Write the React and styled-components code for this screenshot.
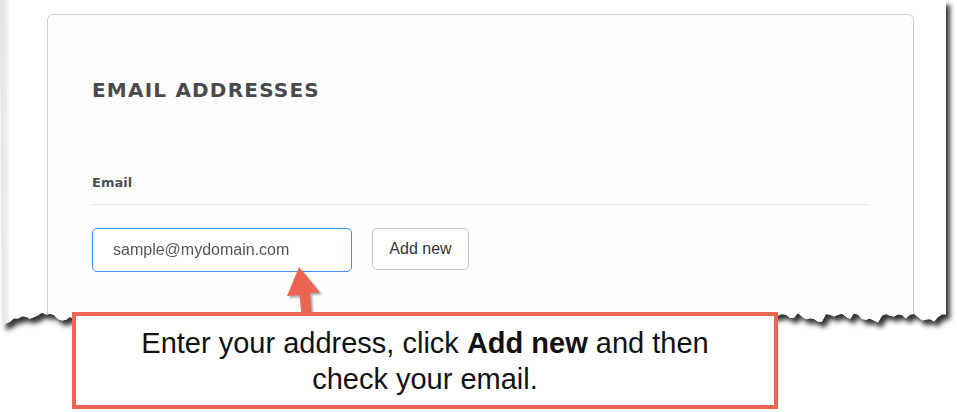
import React from 'react'
import styled, { createGlobalStyle } from 'styled-components'

const GlobalStyle = createGlobalStyle`
  html, body {
    margin: 0;
    padding: 0;
    background: #fff;
  }
  body {
    font-family: 'Liberation Sans', Arial, sans-serif;
  }
`

// ragged bottom edge of the clipped screenshot
const tornEdge = (() => {
  const pts = ['0px 0px', '946px 0px']
  for (let x = 946; x >= 0; x -= 4) {
    const n = ((x * 7919) % 7) - 3
    let y = 317 + 2.4 * Math.sin(x * 0.11) + 1.6 * Math.sin(x * 0.43 + 1) + n * 0.7
    if (x < 14) y += (14 - x) * 0.5
    if (x > 60 && x < 790) y = Math.max(y, 314)
    pts.push(`${x}px ${y.toFixed(1)}px`)
  }
  return `polygon(${pts.join(', ')})`
})()

const Stage = styled.div`
  position: relative;
  width: 957px;
  height: 412px;
  overflow: hidden;
  background: #fff;
`
const Torn = styled.div`
  width: 946px;
  filter: drop-shadow(4px 5px 2.5px rgba(0, 0, 0, 0.8));
`
const Paper = styled.div`
  height: 330px;
  display: flex;
  background: #fff;
  clip-path: ${tornEdge};
`
const Gutter = styled.div`
  width: 9px;
  flex: none;
  background: linear-gradient(to right, #e3e3e3, #ebebeb 60%, #f7f7f7);
`
const Content = styled.div`
  flex: 1;
  display: flex;
  padding: 14px 32px 0 38px;
`
const Card = styled.div`
  flex: 1;
  border: 1px solid #cdcdcd;
  border-bottom: none;
  border-radius: 6px 6px 0 0;
  padding: 64px 45px 0 44px;
  background: #fdfdfd;
`
const Title = styled.h2`
  margin: 0;
  font-family: 'DejaVu Sans', sans-serif;
  font-weight: 700;
  font-size: 20px;
  line-height: 23px;
  letter-spacing: 1.2px;
  color: #4a4a4e;
`
const Label = styled.div`
  margin-top: 73px;
  padding-bottom: 13px;
  border-bottom: 1px solid #e6e6e6;
  font-family: 'DejaVu Sans', sans-serif;
  font-weight: 700;
  font-size: 13px;
  line-height: 16px;
  color: #505053;
`
const Row = styled.div`
  margin-top: 23px;
  display: flex;
  align-items: flex-start;
  gap: 20px;
`
const Input = styled.input`
  box-sizing: border-box;
  width: 260px;
  height: 44px;
  padding: 0 20px;
  border: 1px solid #3d8ef2;
  border-radius: 5px;
  outline: none;
  background: #fff;
  font-family: 'Liberation Sans', Arial, sans-serif;
  font-size: 16px;
  color: #555;
  &::placeholder {
    color: #555;
    opacity: 1;
  }
`
const Button = styled.button`
  box-sizing: border-box;
  width: 97px;
  height: 42px;
  border: 1px solid #c6c6c6;
  border-radius: 5px;
  background: #fff;
  font-family: 'Liberation Sans', Arial, sans-serif;
  font-size: 16px;
  color: #333;
  cursor: pointer;
`
const Arrow = styled.svg`
  position: absolute;
  left: 280px;
  top: 260px;
  width: 50px;
  height: 60px;
  overflow: visible;
  filter: drop-shadow(2px 2px 1px rgba(0, 0, 0, 0.35));
`
const Callout = styled.div`
  position: absolute;
  left: 72px;
  top: 312px;
  box-sizing: border-box;
  width: 706px;
  height: 97px;
  padding-top: 9px;
  border: 4px solid #ec6553;
  background: #fff;
  text-align: center;
  font-family: 'Liberation Sans', Arial, sans-serif;
  font-size: 29px;
  line-height: 36px;
  color: #111;
  b {
    font-weight: 700;
  }
`

export default function App() {
  return (
    <Stage>
      <GlobalStyle />
      <Torn>
        <Paper>
          <Gutter />
          <Content>
            <Card>
              <Title>EMAIL ADDRESSES</Title>
              <Label>Email</Label>
              <Row>
                <Input type='text' placeholder='sample@mydomain.com' />
                <Button>Add new</Button>
              </Row>
            </Card>
          </Content>
        </Paper>
      </Torn>
      <Arrow viewBox='0 0 50 60'>
        <polygon
          points='19,7 7,36 19.5,35 21.5,56 31.5,56 30,33 40,32.5'
          fill='#ec6553'
        />
      </Arrow>
      <Callout>
        Enter your address, click <b>Add new</b> and then
        <br />
        check your email.
      </Callout>
    </Stage>
  )
}
